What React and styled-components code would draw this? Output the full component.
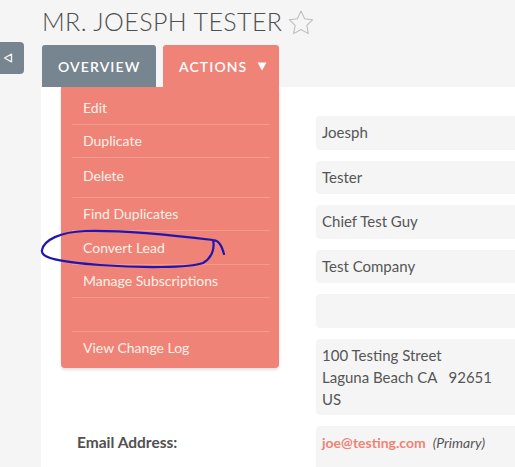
import React from 'react'
import styled, { createGlobalStyle } from 'styled-components'

const GlobalStyle = createGlobalStyle`
  html, body {
    margin: 0;
    padding: 0;
    background: #f5f5f5;
  }
  body {
    font-family: Lato, "Open Sans", sans-serif;
    color: #555;
    overflow: hidden;
  }
`

const Page = styled.div`
  display: flex;
  height: 467px;
  position: relative;
  overflow: hidden;
`

const Side = styled.div`
  width: 41px;
  flex-shrink: 0;
  padding-top: 42px;
`

const Toggle = styled.button`
  width: 24px;
  height: 32px;
  border: 0;
  background: #778591;
  border-radius: 0 4px 4px 0;
  display: flex;
  align-items: center;
  justify-content: flex-start;
  padding: 0 0 0 3px;
`

const Main = styled.div`
  flex: 1;
  min-width: 0;
  display: flex;
  flex-direction: column;
`

const Header = styled.div`
  flex-shrink: 0;
  display: flex;
  align-items: center;
  gap: 5px;
  height: 45px;
  padding-left: 1px;
`

const Title = styled.h2`
  margin: 0 0 4px;
  font-size: 25px;
  font-weight: 300;
  color: #4f4f4f;
  letter-spacing: 0.4px;
  white-space: nowrap;
`

const Tabs = styled.div`
  flex-shrink: 0;
  display: flex;
  gap: 7px;
  padding-left: 1px;
  height: 42px;
`

const Tab = styled.div`
  width: ${p => p.width}px;
  background: ${p => p.active ? '#f08377' : '#778591'};
  border-radius: 3px 3px 0 0;
  color: #fff;
  font-size: 14px;
  font-weight: 600;
  letter-spacing: 1.1px;
  display: flex;
  align-items: center;
  padding-left: 16px;
  box-sizing: border-box;
  gap: 10px;
`

const Panel = styled.div`
  flex: 1;
  min-height: 0;
  background: #fff;
  position: relative;
`

const Fields = styled.div`
  display: grid;
  grid-template-columns: 275px 1fr;
  row-gap: 11px;
  padding-top: 29px;
`

const Label = styled.div`
  padding: 7px 0 0 36px;
  font-size: 15.5px;
  font-weight: 700;
  color: #505050;
`

const Value = styled.div`
  background: #f5f5f5;
  border-radius: 4px 0 0 4px;
  min-height: ${p => p.tallBox ? 60 : 33.5}px;
  padding: ${p => p.multi ? '5px 6px' : '0 6px'};
  line-height: ${p => p.multi ? '22px' : '33.5px'};
  font-size: 15px;
  color: #555;
  box-sizing: border-box;
`

const EmailLink = styled.span`
  color: #f08377;
  font-weight: 700;
  font-size: 14px;
`

const Note = styled.span`
  font-style: italic;
  font-size: 14px;
  margin-left: 7px;
`

const Menu = styled.ul`
  position: absolute;
  top: 0;
  left: 20px;
  width: 218px;
  margin: 0;
  padding: 4px 9px 3px 11px;
  list-style: none;
  background: #f08377;
  border-radius: 0 0 4px 4px;
  box-shadow: 0 2px 3px rgba(0, 0, 0, 0.12);
  box-sizing: border-box;
`

const MenuItem = styled.li`
  height: ${p => p.tall ? 34.5 : 32.5}px;
  padding: 0 0 ${p => p.tall ? 4 : 0}px 11px;
  box-sizing: content-box;
  display: flex;
  align-items: center;
  font-size: 14px;
  color: #fdf1e8;
  border-bottom: 1px solid ${p => p.last ? 'transparent' : '#f49a8e'};
`

const Scribble = styled.svg`
  position: absolute;
  top: 0;
  left: 0;
  pointer-events: none;
`

const Star = () => (
  <svg width="28" height="28" viewBox="0 0 24 24">
    <path d="M12 1.8l3.1 6.5 7 0.9-5.1 4.9 1.3 7-6.3-3.5-6.3 3.5 1.3-7L1.9 9.2l7-0.9z"
      fill="none" stroke="#bdbdbd" strokeWidth="0.9" strokeLinejoin="round" />
  </svg>
)

// labels of these rows sit under the open actions menu
const fields = ['Joesph', 'Tester', 'Chief Test Guy', 'Test Company', '']

const menu = ['Edit', 'Duplicate', 'Delete', 'Find Duplicates', 'Convert Lead', 'Manage Subscriptions', '', 'View Change Log']

const App = () => (
  <Page>
    <GlobalStyle />
    <Side>
      <Toggle>
        <svg width="10" height="10" viewBox="0 0 10 10">
          <path d="M8.5 1.2L1.5 5l7 3.8z" fill="none" stroke="#f2f2f2" strokeWidth="1.4" strokeLinejoin="round" />
        </svg>
      </Toggle>
    </Side>
    <Main>
      <Header>
        <Title>MR. JOESPH TESTER</Title>
        <Star />
      </Header>
      <Tabs>
        <Tab width={114}>OVERVIEW</Tab>
        <Tab width={116} active>
          ACTIONS
          <svg width="10" height="9" viewBox="0 0 10 9"><path d="M0.5 0.5h9L5 8.5z" fill="#fff" /></svg>
        </Tab>
      </Tabs>
      <Panel>
        <Fields>
          {fields.map((v, i) => (
            <React.Fragment key={i}>
              <Label />
              <Value>{v}</Value>
            </React.Fragment>
          ))}
          <Label />
          <Value multi>
            100 Testing Street<br />
            Laguna Beach CA&nbsp;&nbsp; 92651<br />
            US
          </Value>
          <Label>Email Address:</Label>
          <Value multi tallBox>
            <EmailLink>joe@testing.com</EmailLink>
            <Note>(Primary)</Note>
          </Value>
        </Fields>
        <Menu>
          {menu.map((m, i) => (
            <MenuItem key={i} tall={m === 'Delete'} last={i === menu.length - 1}>{m}</MenuItem>
          ))}
        </Menu>
      </Panel>
    </Main>
    <Scribble width="515" height="467">
      <path d="M224 254 C222 246, 218 240, 213 240 C180 236, 120 230, 85 231 C60 232, 44 240, 42 250 C40 258, 60 262, 100 265 C140 268, 190 268, 203 263 C212 258, 215 248, 213 240"
        fill="none" stroke="#1f16b2" strokeWidth="2.2" strokeLinecap="round" />
    </Scribble>
  </Page>
)

export default App
